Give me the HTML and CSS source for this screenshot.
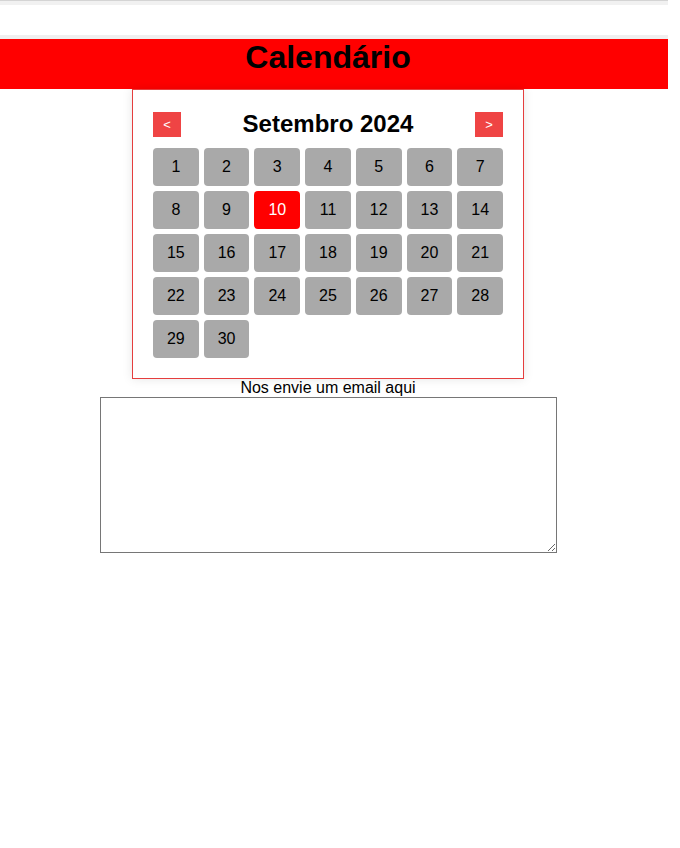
FILE: index.html
```html
<!DOCTYPE html>
<html lang="pt">
<head>
<meta charset="utf-8">
<title>Calendário</title>
<link rel="stylesheet" href="styles.css">
</head>
<body>
<div class="topbar"><div class="topbar-line"></div><div class="topbar-top"></div><div class="topbar-body"></div><div class="topbar-bottom"></div></div>
<header class="header"><h1 class="title">Calendário</h1></header>
<main class="main">
  <section class="calendar">
    <div class="cal-head">
      <button class="nav-btn">&lt;</button>
      <h2 class="month">Setembro 2024</h2>
      <button class="nav-btn">&gt;</button>
    </div>
    <div class="days">
      <div class="day">1</div><div class="day">2</div><div class="day">3</div><div class="day">4</div><div class="day">5</div><div class="day">6</div><div class="day">7</div>
      <div class="day">8</div><div class="day">9</div><div class="day day-active">10</div><div class="day">11</div><div class="day">12</div><div class="day">13</div><div class="day">14</div>
      <div class="day">15</div><div class="day">16</div><div class="day">17</div><div class="day">18</div><div class="day">19</div><div class="day">20</div><div class="day">21</div>
      <div class="day">22</div><div class="day">23</div><div class="day">24</div><div class="day">25</div><div class="day">26</div><div class="day">27</div><div class="day">28</div>
      <div class="day">29</div><div class="day">30</div>
    </div>
  </section>
  <label class="mail-label" for="msg">Nos envie um email aqui</label>
  <textarea class="mail" id="msg"></textarea>
</main>
</body>
</html>
```
FILE: styles.css
```css
html, body {
  margin: 0;
  padding: 0;
  background: #fff;
  font-family: "Liberation Sans", Arial, sans-serif;
  color: #000;
}
.topbar {
  width: 668px;
  height: 39px;
  display: flex;
  flex-direction: column;
}
.topbar-line { height: 1px; background: #d4d4d4; }
.topbar-top { height: 4px; background: #f1f1f1; }
.topbar-body { flex: 1; background: #fff; }
.topbar-bottom { height: 4px; background: #efefef; }
.header {
  width: 668px;
  height: 50px;
  background: #ff0000;
  box-sizing: border-box;
  padding-right: 12px;
}
.title {
  margin: 0;
  font-size: 32px;
  font-weight: bold;
  line-height: 37px;
  text-align: center;
}
.main {
  width: 656px;
  display: flex;
  flex-direction: column;
  align-items: center;
}
.calendar {
  width: 392px;
  box-sizing: border-box;
  border: 1px solid #e53e3e;
  padding: 20px;
  background: #fff;
  box-shadow: 0 0 10px rgba(0, 0, 0, 0.1);
}
.cal-head {
  display: flex;
  align-items: center;
  justify-content: space-between;
  height: 28px;
  margin-bottom: 10px;
}
.nav-btn {
  width: 28px;
  height: 25px;
  border: none;
  padding: 0;
  background: #ef4444;
  color: #fff;
  font-family: "Liberation Sans", Arial, sans-serif;
  font-size: 13px;
}
.month {
  margin: 0;
  font-size: 24px;
  font-weight: bold;
}
.days {
  display: grid;
  grid-template-columns: repeat(7, 1fr);
  gap: 5px;
}
.day {
  height: 38px;
  border-radius: 4px;
  background: #a9a9a9;
  display: flex;
  align-items: center;
  justify-content: center;
  font-size: 16px;
}
.day-active {
  background: #ff0000;
  color: #fff;
}
.mail-label {
  font-size: 16px;
  line-height: 18px;
}
.mail {
  width: 457px;
  height: 156px;
  box-sizing: border-box;
  margin: 0;
  border: 1px solid #767676;
}
```
